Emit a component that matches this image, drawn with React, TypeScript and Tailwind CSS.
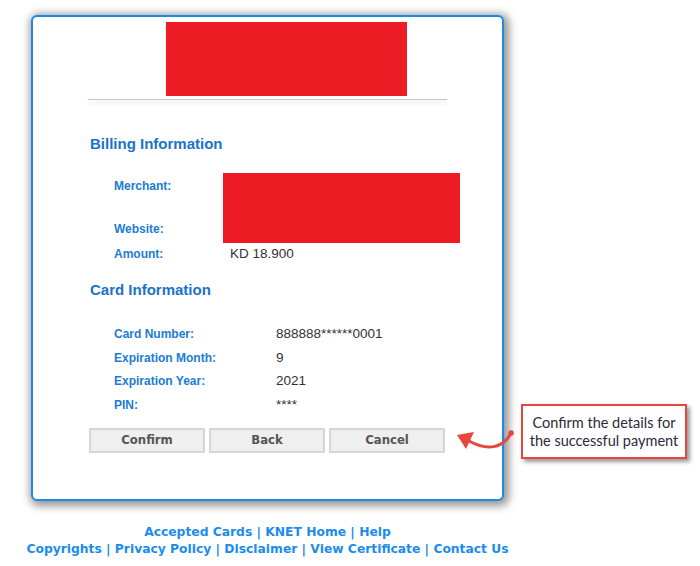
import React from 'react'

const labelCls = "text-[12px] font-bold text-[#1c7bd4] leading-[14px]"
const valueCls = "text-[13.5px] text-[#333] leading-[16px]"

const cardRows = [
  { label: 'Card Number:', value: '888888******0001' },
  { label: 'Expiration Month:', value: '9' },
  { label: 'Expiration Year:', value: '2021' },
  { label: 'PIN:', value: '****' },
]

const footerTop = ['Accepted Cards', 'KNET Home', 'Help']
const footerBottom = ['Copyrights', 'Privacy Policy', 'Disclaimer', 'View Certificate', 'Contact Us']

function FooterLine({ items }: { items: string[] }) {
  return (
    <div className="whitespace-nowrap">
      {items.map((t, i) => (
        <span key={t}>
          {i > 0 && <span className="text-[#1a8cf0]"> | </span>}
          <a className="text-[#1a8cf0]">{t}</a>
        </span>
      ))}
    </div>
  )
}

export default function App() {
  return (
    <div className="relative w-[700px] h-[566px] bg-white font-['Liberation_Sans',Arial,sans-serif]">
      {/* payment card */}
      <div className="ml-[31px] pt-[15px] w-[473px]">
        <div className="h-[486px] rounded-[6px] border-2 border-[#1e88e5] bg-white shadow-[2px_2px_9px_3px_rgba(0,0,0,0.42)]">
          <div className="mt-[5px] ml-[133px] w-[241px] h-[74px] bg-[#ed1c24]" />
          <div className="mt-[3px] ml-[55px] w-[359px] h-px bg-[#c4c4c4] shadow-[0_3px_5px_rgba(0,0,0,0.2)]" />

          <div className="pl-[57px]">
            <h2 className="mt-[35px] text-[15px] font-bold leading-[17px] text-[#1a73c9]">Billing Information</h2>

            <div className="mt-[21px] ml-[24px] flex">
              <div className="w-[109px] h-[70px] flex flex-col justify-between pt-[6px] pb-[7px]">
                <span className={labelCls}>Merchant:</span>
                <span className={labelCls}>Website:</span>
              </div>
              <div className="w-[237px] h-[70px] bg-[#ed1c24]" />
            </div>
            <div className="mt-[3px] ml-[24px] flex items-center">
              <span className={`${labelCls} w-[116px]`}>Amount:</span>
              <span className={valueCls}>KD 18.900</span>
            </div>

            <h2 className="mt-[19px] text-[15px] font-bold leading-[17px] text-[#1a73c9]">Card Information</h2>

            <div className="mt-[28px] ml-[24px] flex flex-col gap-[7.5px]">
              {cardRows.map((r) => (
                <div key={r.label} className="flex items-center">
                  <span className={`${labelCls} w-[162px]`}>{r.label}</span>
                  <span className={valueCls}>{r.value}</span>
                </div>
              ))}
            </div>

            <div className="mt-[15px] -ml-[1px] flex gap-[4px]">
              {['Confirm', 'Back', 'Cancel'].map((b) => (
                <button
                  key={b}
                  className="w-[116px] h-[25px] bg-[#efefef] border-2 border-[#d6d6d6] text-[13px] font-bold text-[#555] font-['DejaVu_Sans_Condensed','DejaVu_Sans',sans-serif]"
                >
                  {b}
                </button>
              ))}
            </div>
          </div>
        </div>
      </div>

      {/* footer links */}
      <div className="mt-[23px] ml-[31px] w-[473px] flex flex-col items-center text-[12.3px] font-bold leading-[17px] font-['DejaVu_Sans',Verdana,sans-serif]">
        <FooterLine items={footerTop} />
        <FooterLine items={footerBottom} />
      </div>

      {/* annotation arrow */}
      <svg className="absolute left-[450px] top-[422px]" width="70" height="40" viewBox="450 422 70 40">
        <circle cx="511" cy="433" r="2.8" fill="#e8453c" />
        <path d="M511 433 C 504 447 489 452 469 441" fill="none" stroke="#e8453c" strokeWidth="3" strokeLinecap="round" />
        <path d="M457 435 L 474 432 L 466 449 Z" fill="#e8453c" />
      </svg>

      {/* annotation callout */}
      <div className="absolute left-[521px] top-[404px] w-[166px] h-[55px] border-2 border-[#e8453c] bg-white shadow-[3px_3px_4px_rgba(0,0,0,0.4)] flex flex-col items-center justify-center text-[14.5px] leading-[18px] text-[#2a2a3a] font-['Lato','Noto_Sans',sans-serif]">
        <span>Confirm the details for</span>
        <span>the successful payment</span>
      </div>
    </div>
  )
}
